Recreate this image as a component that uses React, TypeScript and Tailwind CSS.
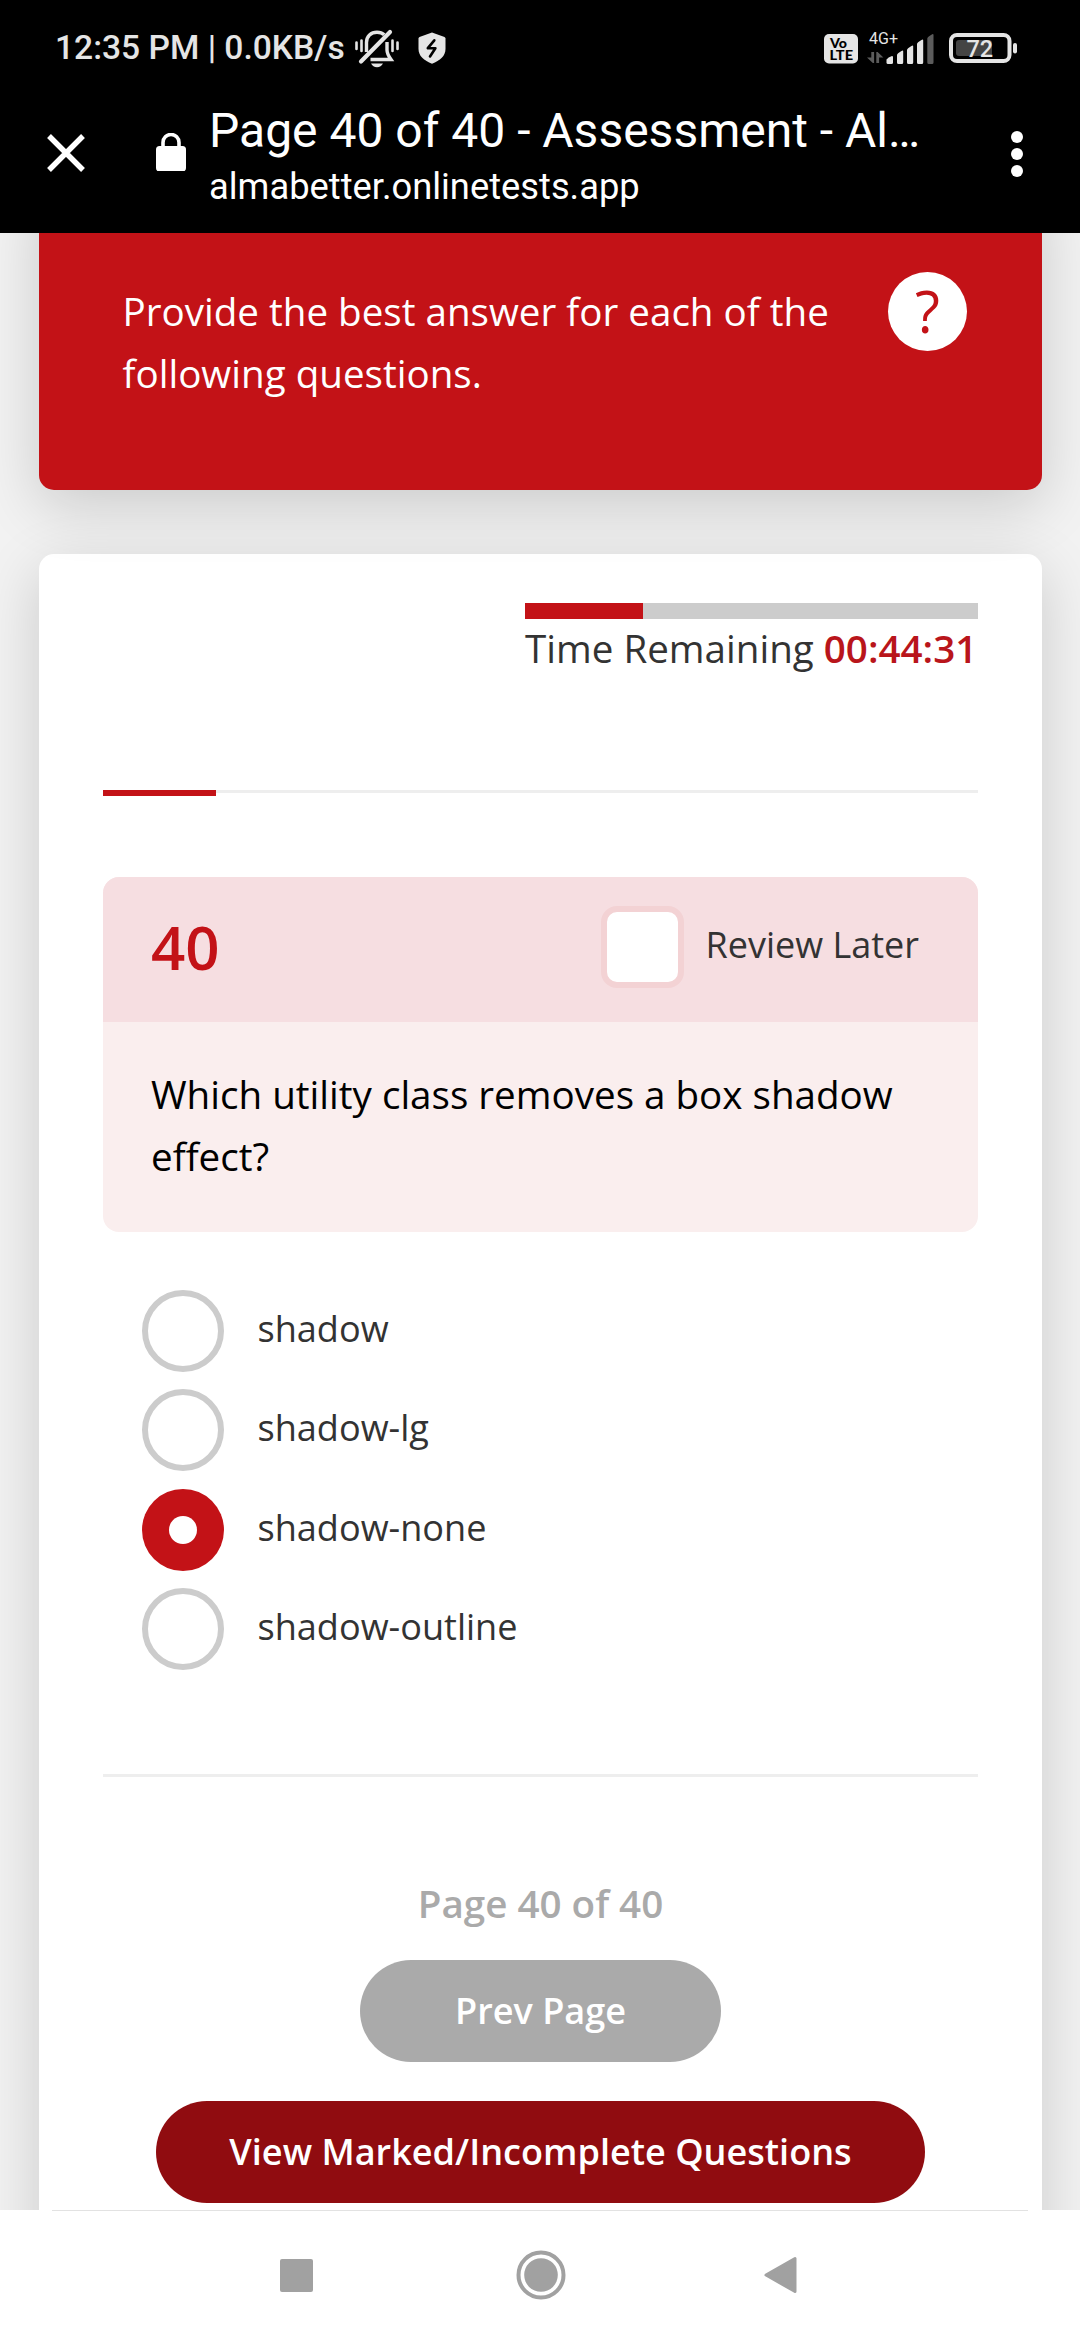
const options = ["shadow", "shadow-lg", "shadow-none", "shadow-outline"];
const selected = "shadow-none";

function MutedBell() {
  return (
    <svg className="ml-[10px] h-[40px] w-[44px] shrink-0" viewBox="0 0 44 40" fill="none" stroke="#e5e5e5" strokeWidth="3.4">
      <path d="M11.5 23V13.5C11.5 7 16 3.2 22 3.2c3 0 5.400.9 7.200 2.600" />
      <path d="M32 13v8c0 3.500 1.500 6 4 9.500H15.500" />
      <path d="M6 32.500 35 3" strokeWidth="4.200" strokeLinecap="round" />
      <path d="M16 34.500h12c-1.200 2.400-3.300 3.700-6 3.700s-4.800-1.300-6-3.700Z" fill="#e5e5e5" stroke="none" />
      <path d="M1.500 13.500v6.500M6.500 11.500v10.500M37.500 11.500v10.500M42.500 13.500v6.500" strokeWidth="2.600" strokeLinecap="round" />
    </svg>
  );
}

function Shield() {
  return (
    <svg className="mb-[2px] ml-[19px] h-[32px] w-[28px] shrink-0" viewBox="0 0 28 32">
      <path d="M14 0.500 26.500 5Q27.500 5.500 27.500 6.500V17C27.500 24 22 28.500 14 31.800 6 28.500.5 24 .5 17V6.500Q.5 5.500 1.500 5Z" fill="#e5e5e5" />
      <path d="M16.300 8.300 9.800 16.200h7.600L12 24.500" fill="none" stroke="#000" strokeWidth="2.600" strokeLinejoin="round" strokeLinecap="round" />
    </svg>
  );
}

function VolteBadge() {
  return (
    <svg className="h-[30px] w-[34px]" viewBox="0 0 34 30" fontFamily="Lato, sans-serif" fontWeight="900" fill="#000">
      <rect width="34" height="29.500" rx="5" fill="#e5e5e5" />
      <text x="6" y="13.800" fontSize="12.500" textLength="17" lengthAdjust="spacingAndGlyphs">Vo</text>
      <text x="5.500" y="26.200" fontSize="13" textLength="23.500" lengthAdjust="spacingAndGlyphs">LTE</text>
    </svg>
  );
}

function Signal() {
  return (
    <svg className="mb-[1px] ml-[9px] h-[50px] w-[68px]" viewBox="868 22 68 50">
      <text x="870" y="42.500" fontSize="16" fontFamily="Roboto, sans-serif" fill="#e5e5e5" textLength="29">4G+</text>
      <path d="M872.300 51h2.800v11h-1.300l-5.800-5.500h4.300ZM877.300 62h2.800v-5.500h4.300l-5.800-5.500h-1.300Z" fill="#5c5c5c" />
      <g fill="#e5e5e5">
        <path d="M887.500 58.500Q889 56 893 55q1 0 1 1V61.500q0 1.500-1.500 1.500h-3.500q-1.500 0-1.500-1.500Z" />
        <path d="M898 54q0-1.500 4.500-4 1.700-1 1.700.500V61.500q0 1.500-1.500 1.500h-3.200q-1.500 0-1.500-1.500Z" />
        <path d="M908 49q0-1.500 4.500-4 1.700-1 1.700.500V61.500q0 1.500-1.500 1.500h-3.200q-1.500 0-1.500-1.500Z" />
        <path d="M918 43q0-1.500 4.500-4 1.700-1 1.700.500V61.500q0 1.500-1.500 1.500h-3.200q-1.500 0-1.500-1.500Z" />
      </g>
      <path d="M928.300 37.500q0-1.500 4.500-4 1.700-1 1.700.500V61.500q0 1.500-1.500 1.500h-3.200q-1.500 0-1.500-1.500Z" fill="#5c5c5c" />
    </svg>
  );
}

function Battery() {
  return (
    <svg className="mb-[2px] ml-[13px] h-[32px] w-[70px]" viewBox="948 31 70 32">
      <rect x="951" y="34" width="58.500" height="26" rx="6" fill="none" stroke="#e5e5e5" strokeWidth="4" />
      <rect x="956" y="39" width="36" height="16" rx="3" fill="#444" />
      <rect x="1013" y="42" width="4" height="10.500" rx="2" fill="#e5e5e5" />
      <text x="966.500" y="56" fontSize="23.500" fontWeight="500" fontFamily="Roboto, sans-serif" fill="#e5e5e5">72</text>
    </svg>
  );
}

export default function App() {
  return (
    <div className="flex h-[2340px] w-[1080px] flex-col overflow-hidden bg-white font-['Open_Sans',sans-serif] text-[#333]">
      <header className="relative z-20 h-[233px] shrink-0 bg-black font-[Roboto,sans-serif] text-white">
        <div className="flex h-[97px] items-center pr-[62px] pl-[55px] text-[#e5e5e5]">
          <span className="text-[33.6px] font-medium whitespace-nowrap">12:35 PM | 0.0KB/s</span>
          <MutedBell />
          <Shield />
          <div className="ml-auto flex items-center">
            <VolteBadge />
            <Signal />
            <Battery />
          </div>
        </div>
        <div className="flex h-[136px]">
          <svg className="mt-[37px] ml-[47px] h-[38px] w-[38px]" viewBox="0 0 38 38" stroke="#fff" strokeWidth="5.400">
            <path d="M2 2 36 36M36 2 2 36" />
          </svg>
          <svg className="mt-[36px] ml-[71px] h-[38px] w-[30px]" viewBox="0 0 30 38">
            <rect y="13" width="30" height="25.500" rx="3.500" fill="#fff" />
            <path d="M7 14V9.500a8 8 0 0 1 16 0V14" fill="none" stroke="#fff" strokeWidth="3.600" />
          </svg>
          <div className="mt-[6px] ml-[23px] whitespace-nowrap">
            <h1 className="text-[48px] leading-[56px]">Page 40 of 40 - Assessment - Al…</h1>
            <p className="text-[36.3px] leading-[56px]">almabetter.onlinetests.app</p>
          </div>
          <div className="mt-[34px] mr-[57px] ml-auto flex flex-col gap-[5px]">
            <i className="size-[12px] rounded-full bg-white" />
            <i className="size-[12px] rounded-full bg-white" />
            <i className="size-[12px] rounded-full bg-white" />
          </div>
        </div>
      </header>

      <main className="h-[1977px] shrink-0 overflow-hidden bg-[#f2f2f2] pr-[38px] pl-[39px]">
        <section className="relative z-10 -mt-[50px] flex h-[307px] justify-between rounded-[15px] bg-[#c31217] pr-[75px] pl-[83.5px] text-white shadow-[0_16px_60px_rgba(0,0,0,0.165)]">
          <p className="mt-[98px] text-[38.6px] leading-[61.6px] whitespace-nowrap">
            Provide the best answer for each of the
            <br />
            following questions.
          </p>
          <div className="mt-[89px] flex size-[79px] shrink-0 justify-center rounded-full bg-white text-[57.6px] leading-[77px] font-medium text-[#c31217]">?</div>
        </section>

        <section className="mt-[64px] flex h-[1800px] flex-col rounded-[15px] bg-white px-[64px] pt-[49px] shadow-[0_16px_60px_rgba(0,0,0,0.165)]">
          <div className="w-[453px] self-end whitespace-nowrap">
            <div className="h-[16px] bg-[#ccc]">
              <div className="h-full w-[118px] bg-[#c31217]" />
            </div>
            <p className="text-[38.6px] leading-[58px]">
              Time Remaining <strong className="font-semibold text-[#b9151b]">00:44:31</strong>
            </p>
          </div>

          <div className="mt-[113px] h-[6px]">
            <div className="h-[3px] bg-[#eee]">
              <div className="h-[6px] w-[113px] bg-[#c31217]" />
            </div>
          </div>

          <div className="mt-[81px] h-[355px] shrink-0 overflow-hidden rounded-[16px] bg-[#faeeee]">
            <div className="flex h-[145px] items-start bg-[#f6dee1] pr-[59px] pl-[48px]">
              <span className="mt-[30px] text-[60px] leading-[80px] font-semibold text-[#c31217]">40</span>
              <span className="mt-[29px] ml-auto h-[82px] w-[83px] rounded-[16px] border-[6px] border-[#f3d2d4] bg-white" />
              <span className="mt-[38px] ml-[21px] text-[36px] leading-[60px]">Review Later</span>
            </div>
            <p className="pt-[41px] pl-[48px] text-[38.6px] leading-[62px] whitespace-nowrap text-black">
              Which utility class removes a box shadow
              <br />
              effect?
            </p>
          </div>

          <ul className="mt-[58px] flex flex-col gap-[17.3px] pl-[39px]">
            {options.map((o) => (
              <li key={o} className="flex h-[82px] items-start gap-[33.5px]">
                {o === selected ? (
                  <span className="flex size-[82px] items-center justify-center rounded-full bg-[#c31217]">
                    <span className="size-[28px] rounded-full bg-white" />
                  </span>
                ) : (
                  <span className="size-[82px] rounded-full border-[6px] border-[#ccc]" />
                )}
                <span className="text-[36.1px] leading-[76px]">{o}</span>
              </li>
            ))}
          </ul>

          <div className="mt-[104px] h-[3px] shrink-0 bg-[#eee]" />
          <div className="flex flex-col items-center font-semibold">
            <p className="mt-[95px] text-[38.6px] leading-[62px] text-[#aaa]">Page 40 of 40</p>
            <button className="mt-[26px] flex h-[102px] w-[361px] justify-center rounded-full bg-[#aaa] text-[36.1px] leading-[100px] text-white">Prev Page</button>
            <button className="mt-[39px] flex h-[102px] w-[769px] justify-center rounded-full bg-[#900c10] text-[36.1px] leading-[100px] whitespace-nowrap text-white">View Marked/Incomplete Questions</button>
          </div>
        </section>
      </main>

      <nav className="relative h-[130px] shrink-0 bg-white">
        <div className="mx-[52px] h-px bg-[#e2e2e2]" />
        <div className="flex h-[128px] items-center pl-[280px]">
          <span className="size-[33px] rounded-[2px] bg-[#a1a1a1]" />
          <svg className="ml-[203px] size-[50px]" viewBox="0 0 50 50" fill="#a1a1a1">
            <circle cx="25" cy="25" r="22.500" fill="none" stroke="#a1a1a1" strokeWidth="4" />
            <circle cx="25" cy="25" r="16.800" />
          </svg>
          <svg className="ml-[198px] h-[38px] w-[33px]" viewBox="0 0 33 38">
            <path d="M2 19 31 2.500V35.500Z" fill="#a1a1a1" stroke="#a1a1a1" strokeWidth="3" strokeLinejoin="round" />
          </svg>
        </div>
      </nav>
    </div>
  );
}
